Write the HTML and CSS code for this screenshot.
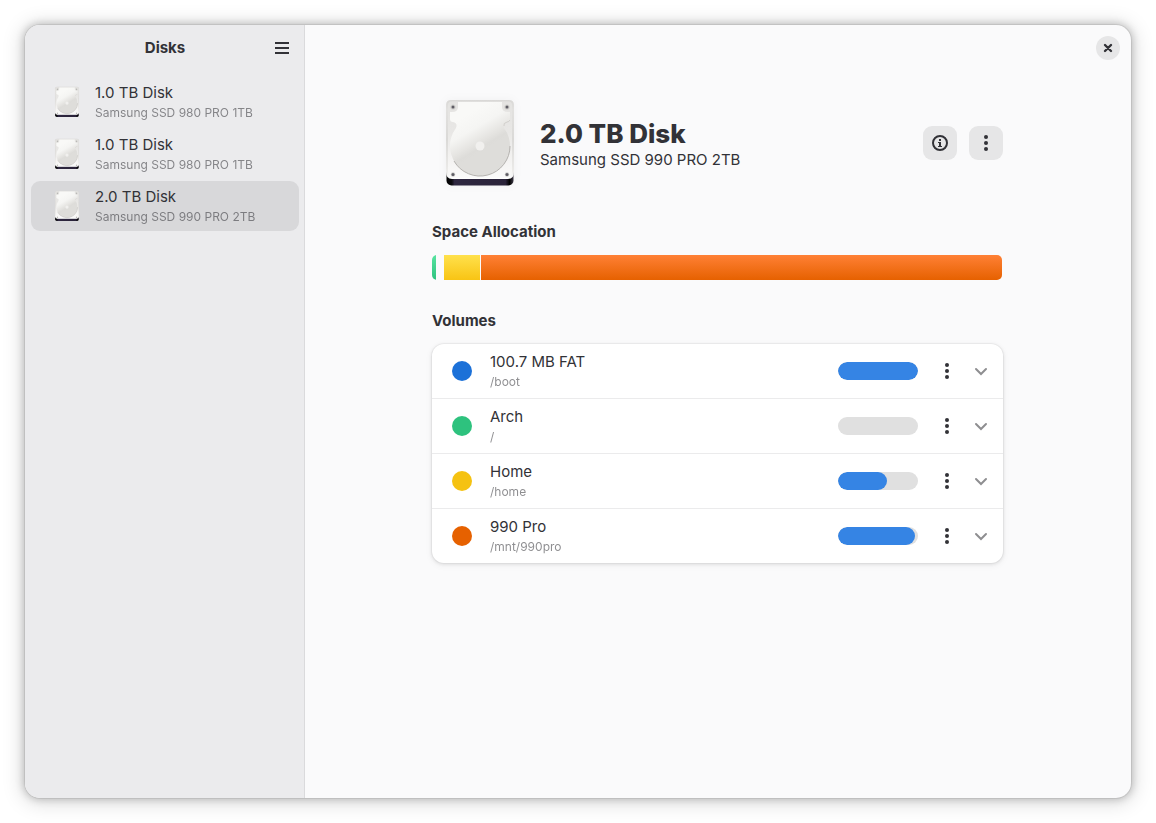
FILE: index.html
```html
<!DOCTYPE html>
<html lang="en">
<head>
    <meta charset="UTF-8">
    <meta name="viewport" content="width=device-width, initial-scale=1.0">
    <title>Disks</title>
    <link rel="stylesheet" href="styles.css">
</head>
<body>
    <!-- Shared icons -->
    <svg class="icon-defs" width="0" height="0" aria-hidden="true">
        <defs>
            <linearGradient id="disk-case" x1="0" y1="0" x2="0" y2="1">
                <stop offset="0" stop-color="#d9d8d6"/>
                <stop offset="0.12" stop-color="#e2e1df"/>
                <stop offset="0.5" stop-color="#dad9d7"/>
                <stop offset="0.9" stop-color="#ecebe9"/>
                <stop offset="1" stop-color="#ffffff"/>
            </linearGradient>
            <linearGradient id="disk-face" x1="0" y1="0" x2="0" y2="1">
                <stop offset="0" stop-color="#e4e3e1"/>
                <stop offset="0.4" stop-color="#e8e7e5"/>
                <stop offset="0.8" stop-color="#f5f4f3"/>
                <stop offset="1" stop-color="#fafaf9"/>
            </linearGradient>
            <linearGradient id="disk-plate" gradientUnits="userSpaceOnUse" x1="34" y1="20" x2="54" y2="54">
                <stop offset="0" stop-color="#f9f9f7"/>
                <stop offset="0.4" stop-color="#f5f5f3"/>
                <stop offset="0.75" stop-color="#e5e4e1"/>
                <stop offset="0.9" stop-color="#dddcd9"/>
                <stop offset="1" stop-color="#deddda"/>
            </linearGradient>
            <linearGradient id="disk-base" x1="0" y1="0" x2="1" y2="0">
                <stop offset="0" stop-color="#000000"/>
                <stop offset="0.08" stop-color="#0c0b10"/>
                <stop offset="0.12" stop-color="#2e2740"/>
                <stop offset="0.88" stop-color="#2a2339"/>
                <stop offset="0.94" stop-color="#000000"/>
                <stop offset="1" stop-color="#3d3846"/>
            </linearGradient>
        </defs>
        <symbol id="icon-disk" viewBox="0 0 96 96">
            <rect x="14.500" y="70" width="67" height="20.500" rx="5" fill="url(#disk-base)"/>
            <path d="M19 5H77Q82 5 82 10V77Q82 84 76 84H20Q14 84 14 77V10Q14 5 19 5Z" fill="url(#disk-case)"/>
            <path d="M20 6.500H76Q80 6.500 80 10V76Q80 82.500 75 82.500H21Q16 82.500 16 76V10Q16 6.500 20 6.500Z" fill="url(#disk-face)"/>
            <path d="M26 7H70V12Q70 17 76 17H78V24Q78 27 75 27Q70 28 72 33A30 30 0 1 1 24 33Q26 28 21 27Q18 27 18 24V17H20Q26 17 26 12Z" fill="url(#disk-plate)"/>
            <path d="M22 66A30 30 0 0 0 78 51" fill="none" stroke="#aeaca8" stroke-width="0.900"/>
            <path d="M78 25Q77 27 75 27Q71 28 72 31" fill="none" stroke="#cbc9c5" stroke-width="0.800"/>
            <circle cx="48" cy="51" r="4.500" fill="#f1f0ee"/>
            <g fill="#cfcecb">
                <circle cx="21" cy="12" r="2.600"/>
                <circle cx="75" cy="12" r="2.600"/>
                <circle cx="21" cy="79.500" r="2.200"/>
                <circle cx="75" cy="79.500" r="2.200"/>
            </g>
            <g fill="currentColor">
                <circle cx="21" cy="12" r="1.500"/>
                <circle cx="75" cy="12" r="1.500"/>
                <circle cx="21" cy="79.500" r="1.500"/>
                <circle cx="75" cy="79.500" r="1.500"/>
            </g>
        </symbol>
        <symbol id="icon-more" viewBox="0 0 16 16">
            <circle cx="8" cy="2" r="2"/>
            <circle cx="8" cy="8" r="2"/>
            <circle cx="8" cy="14" r="2"/>
        </symbol>
        <symbol id="icon-menu" viewBox="0 0 16 16">
            <path d="M1 2h14v2H1zM1 7h14v2H1zM1 12h14v2H1z"/>
        </symbol>
        <symbol id="icon-chevron" viewBox="0 0 16 16">
            <path d="M3 6l5 5 5-5" fill="none" stroke="currentColor" stroke-width="2" stroke-linecap="round"/>
        </symbol>
        <symbol id="icon-info" viewBox="0 0 16 16">
            <circle cx="8" cy="8" r="7" fill="none" stroke="currentColor" stroke-width="2"/>
            <path d="M7 4h2v2H7zM6 7h3v4h1v1H6v-1h1V8H6z"/>
        </symbol>
        <symbol id="icon-close" viewBox="0 0 16 16">
            <path d="M5 5l6 6M11 5l-6 6" fill="none" stroke="currentColor" stroke-width="2.400" stroke-linecap="round"/>
        </symbol>
    </svg>

    <div class="window">
        <aside class="sidebar">
            <header class="sidebar-header">
                <h1 class="sidebar-title">Disks</h1>
                <button class="icon-button" type="button" aria-label="Main menu">
                    <svg class="icon"><use href="#icon-menu"/></svg>
                </button>
            </header>
            <nav class="disk-list">
                <a class="disk-row" href="#">
                    <svg class="disk-icon"><use href="#icon-disk"/></svg>
                    <span class="labels">
                        <span class="label-title">1.0 TB Disk</span>
                        <span class="label-subtitle">Samsung SSD 980 PRO 1TB</span>
                    </span>
                </a>
                <a class="disk-row" href="#">
                    <svg class="disk-icon"><use href="#icon-disk"/></svg>
                    <span class="labels">
                        <span class="label-title">1.0 TB Disk</span>
                        <span class="label-subtitle">Samsung SSD 980 PRO 1TB</span>
                    </span>
                </a>
                <a class="disk-row selected" href="#" aria-current="page">
                    <svg class="disk-icon"><use href="#icon-disk"/></svg>
                    <span class="labels">
                        <span class="label-title">2.0 TB Disk</span>
                        <span class="label-subtitle">Samsung SSD 990 PRO 2TB</span>
                    </span>
                </a>
            </nav>
        </aside>

        <main class="content">
            <header class="content-header">
                <button class="close-button" type="button" aria-label="Close">
                    <svg class="icon"><use href="#icon-close"/></svg>
                </button>
            </header>

            <div class="page">
                <section class="drive">
                    <svg class="drive-icon"><use href="#icon-disk"/></svg>
                    <div class="drive-labels">
                        <h2 class="drive-title">2.0 TB Disk</h2>
                        <p class="drive-model">Samsung SSD 990 PRO 2TB</p>
                    </div>
                    <div class="drive-actions">
                        <button class="icon-button raised" type="button" aria-label="Drive information">
                            <svg class="icon"><use href="#icon-info"/></svg>
                        </button>
                        <button class="icon-button raised" type="button" aria-label="Drive options">
                            <svg class="icon"><use href="#icon-more"/></svg>
                        </button>
                    </div>
                </section>

                <section class="group">
                    <h3 class="group-title">Space Allocation</h3>
                    <div class="space-bar">
                        <div class="segment arch"></div>
                        <div class="segment home"></div>
                        <div class="segment pro"></div>
                    </div>
                </section>

                <section class="group">
                    <h3 class="group-title">Volumes</h3>
                    <ul class="volume-list">
                        <li class="volume-row">
                            <span class="dot blue"></span>
                            <div class="labels">
                                <span class="label-title">100.7 MB FAT</span>
                                <span class="label-subtitle">/boot</span>
                            </div>
                            <progress class="usage" value="100" max="100" aria-label="/boot usage"></progress>
                            <div class="volume-actions">
                                <button class="icon-button" type="button" aria-label="Volume options">
                                    <svg class="icon"><use href="#icon-more"/></svg>
                                </button>
                                <button class="icon-button expander" type="button" aria-label="Expand">
                                    <svg class="icon"><use href="#icon-chevron"/></svg>
                                </button>
                            </div>
                        </li>
                        <li class="volume-row">
                            <span class="dot green"></span>
                            <div class="labels">
                                <span class="label-title">Arch</span>
                                <span class="label-subtitle">/</span>
                            </div>
                            <progress class="usage" value="0" max="100" aria-label="/ usage"></progress>
                            <div class="volume-actions">
                                <button class="icon-button" type="button" aria-label="Volume options">
                                    <svg class="icon"><use href="#icon-more"/></svg>
                                </button>
                                <button class="icon-button expander" type="button" aria-label="Expand">
                                    <svg class="icon"><use href="#icon-chevron"/></svg>
                                </button>
                            </div>
                        </li>
                        <li class="volume-row">
                            <span class="dot yellow"></span>
                            <div class="labels">
                                <span class="label-title">Home</span>
                                <span class="label-subtitle">/home</span>
                            </div>
                            <progress class="usage" value="61" max="100" aria-label="/home usage"></progress>
                            <div class="volume-actions">
                                <button class="icon-button" type="button" aria-label="Volume options">
                                    <svg class="icon"><use href="#icon-more"/></svg>
                                </button>
                                <button class="icon-button expander" type="button" aria-label="Expand">
                                    <svg class="icon"><use href="#icon-chevron"/></svg>
                                </button>
                            </div>
                        </li>
                        <li class="volume-row">
                            <span class="dot orange"></span>
                            <div class="labels">
                                <span class="label-title">990 Pro</span>
                                <span class="label-subtitle">/mnt/990pro</span>
                            </div>
                            <progress class="usage" value="96" max="100" aria-label="/mnt/990pro usage"></progress>
                            <div class="volume-actions">
                                <button class="icon-button" type="button" aria-label="Volume options">
                                    <svg class="icon"><use href="#icon-more"/></svg>
                                </button>
                                <button class="icon-button expander" type="button" aria-label="Expand">
                                    <svg class="icon"><use href="#icon-chevron"/></svg>
                                </button>
                            </div>
                        </li>
                    </ul>
                </section>
            </div>
        </main>
    </div>
</body>
</html>
```
FILE: styles.css
```css
:root {
    --window-bg: #fafafb;
    --sidebar-bg: #ebebed;
    --text: #323237;
    --accent: #3584e4;
}

* {
    box-sizing: border-box;
}

body {
    margin: 0;
    padding: 25px;
    height: 100vh;
    background: #ffffff;
    color: var(--text);
    font-family: Inter, "Liberation Sans", sans-serif;
    font-size: 15px;
    line-height: 20px;
}

h1, h2, h3, p, ul {
    margin: 0;
    padding: 0;
}

.icon-defs {
    position: absolute;
}

.window {
    display: flex;
    height: 100%;
    border-radius: 15px;
    overflow: hidden;
    background: var(--window-bg);
    box-shadow: 0 0 0 1px rgba(0, 0, 0, 0.06), 0 0 8px 1px rgba(0, 0, 0, 0.23), 0 2px 20px 4px rgba(0, 0, 0, 0.13);
}

/* Sidebar */
.sidebar {
    flex: none;
    width: 280px;
    background: var(--sidebar-bg);
    box-shadow: inset -1px 0 0 #dadadc;
}

.sidebar-header {
    display: grid;
    grid-template-columns: 34px 1fr 34px;
    align-items: center;
    height: 46px;
    padding: 0 6px;
}

.sidebar-title {
    grid-column: 2;
    font-size: 15px;
    font-weight: 700;
    text-align: center;
}

.disk-list {
    display: flex;
    flex-direction: column;
    gap: 2px;
    padding: 6px;
}

.disk-row {
    display: flex;
    align-items: center;
    gap: 11px;
    height: 50px;
    padding: 0 19px;
    border-radius: 9px;
    color: inherit;
    text-decoration: none;
}

.disk-row.selected {
    background: #d8d8da;
}

.disk-icon {
    flex: none;
    width: 34px;
    height: 34px;
    color: #b0afad;
}

.labels {
    display: flex;
    flex-direction: column;
    padding-top: 2px;
}

.label-subtitle {
    font-size: 12px;
    opacity: 0.55;
}

/* Buttons */
.icon {
    display: block;
    width: 16px;
    height: 16px;
    fill: currentColor;
}

.icon-button,
.close-button {
    display: flex;
    align-items: center;
    justify-content: center;
    width: 34px;
    height: 34px;
    padding: 0;
    border: none;
    border-radius: 9px;
    background: transparent;
    color: var(--text);
}

.icon-button.raised {
    background: #e6e6e7;
}

.close-button {
    width: 24px;
    height: 24px;
    border-radius: 50%;
    background: #e6e6e7;
}

.expander {
    opacity: 0.55;
}

/* Content */
.content {
    flex: 1;
    min-width: 0;
    padding-right: 1px;
}

.content-header {
    display: flex;
    align-items: center;
    justify-content: flex-end;
    height: 46px;
    padding: 0 10px;
}

.page {
    max-width: 571px;
    margin: 0 auto;
    padding-top: 24px;
}

.drive {
    display: flex;
    align-items: center;
    gap: 12px;
}

.drive-icon {
    flex: none;
    width: 96px;
    height: 96px;
    color: #5e5c64;
    filter: drop-shadow(0 0 4px rgba(0, 0, 0, 0.04));
}

.drive-labels {
    flex: 1;
}

.drive-title {
    font-size: 26px;
    font-weight: 800;
    line-height: 33px;
}

.drive-actions {
    display: flex;
    gap: 12px;
}

.group {
    margin-top: 31px;
}

.group-title {
    margin-bottom: 13px;
    font-size: 15px;
    font-weight: 700;
}

.space-bar {
    display: flex;
    height: 25px;
    margin-right: 1px;
    border-radius: 5px;
    overflow: hidden;
}

.segment.arch {
    width: 4px;
    margin-right: 8px;
    background: linear-gradient(#57e3a0, #2ec27e);
}

.segment.home {
    width: 36px;
    margin-right: 1px;
    background: linear-gradient(#ffe14c, #f8c414);
}

.segment.pro {
    flex: 1;
    background: linear-gradient(#ff8035, #e66100);
}

/* Volumes */
.volume-list {
    list-style: none;
    border-radius: 12px;
    background: #ffffff;
    box-shadow: 0 0 0 1px rgba(0, 0, 6, 0.03), 0 1px 3px 1px rgba(0, 0, 6, 0.07), 0 2px 6px 2px rgba(0, 0, 6, 0.03);
}

.volume-row {
    display: flex;
    align-items: center;
    height: 55px;
    padding: 0 5px 0 20px;
    border-bottom: 1px solid #ebebec;
}

.volume-row:last-child {
    height: 54px;
    border-bottom: none;
}

.dot {
    flex: none;
    width: 20px;
    height: 20px;
    margin-right: 18px;
    border-radius: 50%;
}

.dot.blue { background: #1c71d8; }
.dot.green { background: #2ec27e; }
.dot.yellow { background: #f5c211; }
.dot.orange { background: #e66100; }

.usage {
    appearance: none;
    width: 80px;
    height: 18px;
    margin-left: auto;
    margin-right: 12px;
    border: none;
    border-radius: 9px;
    background: #e0e0e0;
    overflow: hidden;
}

.usage::-webkit-progress-bar {
    background: #e0e0e0;
}

.usage::-webkit-progress-value {
    border-radius: 9px;
    background: var(--accent);
}

.volume-actions {
    display: flex;
}
```
